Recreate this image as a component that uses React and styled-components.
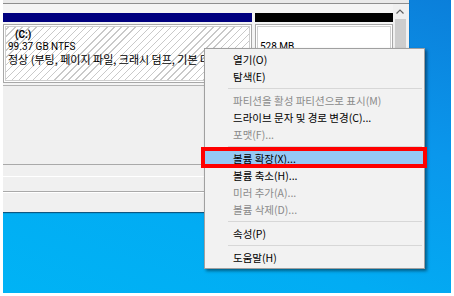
import React from "react";
import styled, { createGlobalStyle } from "styled-components";

const GlobalStyle = createGlobalStyle`
  html, body {
    margin: 0;
    padding: 0;
    background: #ffffff;
  }
  body {
    font-family: "Noto Sans CJK KR", "Noto Sans", sans-serif;
  }
`;

const Screen = styled.div`
  width: 454px;
  height: 296px;
  background: #ffffff;
  padding: 0 3px 3px 3px;
  box-sizing: border-box;
`;

const Desktop = styled.div`
  position: relative;
  width: 448px;
  height: 293px;
  background: linear-gradient(200deg, #0b7fda 0%, #0a97ec 35%, #02acf3 70%, #00b3f5 100%);
  overflow: hidden;
`;

const Window = styled.div`
  width: 406px;
  height: 212px;
  display: flex;
  flex-direction: column;
  background: #f0f0f0;
  box-shadow: 0 1px 1px rgba(20, 50, 80, 0.7);
`;

const TopRule = styled.div`
  height: 3px;
  background: #e9e9e9;
  border-bottom: 1px solid #8e8e8e;
`;

const DiskArea = styled.div`
  display: flex;
  height: 81px;
  border-bottom: 1px solid #b4b4b4;
`;

const DiskPane = styled.div`
  flex: 1;
  display: flex;
  gap: 3px;
  padding-top: 9px;
  background: #f4f4f4;
`;

const Partition = styled.div`
  width: ${({ $w }) => $w}px;
  display: flex;
  flex-direction: column;
  gap: 2px;
`;

const PartitionBar = styled.div`
  height: 9px;
  background: ${({ $color }) => $color};
`;

const PartitionBox = styled.div`
  height: 59px;
  box-sizing: border-box;
  border: 1px solid #a8a8a8;
  box-shadow: inset 0 0 0 1px #ffffff, inset 0 0 0 2px #cfcfcf;
  padding: 4px 4px 0 4px;
  background: ${({ $hatched }) =>
    $hatched
      ? "repeating-linear-gradient(135deg, #ffffff 0 4px, #c9c9c9 4px 5px)"
      : "#ffffff"};
  overflow: hidden;
  white-space: nowrap;
  line-height: 12px;
  color: #000;
`;

const BoxLine = styled.div`
  height: 12px;
  padding-left: ${({ $indent }) => $indent || 0}px;
  font-weight: ${({ $bold }) => ($bold ? 700 : 400)};
  font-family: ${({ $latin }) =>
    $latin ? '"Roboto", "Noto Sans CJK KR", sans-serif' : '"Noto Sans CJK KR", sans-serif'};
  font-size: ${({ $latin }) => ($latin ? "10px" : "11px")};
`;

const Scrollbar = styled.div`
  width: 16px;
  display: flex;
  flex-direction: column;
  align-items: center;
  background: #f0f0f0;
  padding-right: 2px;
  box-sizing: border-box;
`;

const ScrollArrow = styled.div`
  height: 15px;
  display: flex;
  align-items: center;
  justify-content: center;
`;

const ScrollThumb = styled.div`
  width: 11px;
  flex: 1;
  background: #cdcdcd;
`;

const LowerPane = styled.div`
  flex: 1;
  display: flex;
  flex-direction: column;
`;

const Band = styled.div`
  height: ${({ $h }) => $h}px;
  background: #f0f0f0;
  border-bottom: 1px solid ${({ $line }) => $line || "transparent"};
`;

const Menu = styled.div`
  position: absolute;
  left: 201px;
  top: 48px;
  width: 221px;
  box-sizing: border-box;
  padding: 2px 0;
  background: #f2f2f2;
  border: 1px solid #a0a0a0;
  box-shadow: 2px 2px 3px rgba(0, 0, 0, 0.45);
  font-size: 10.5px;
`;

const MenuItem = styled.div`
  position: relative;
  height: 17px;
  display: flex;
  align-items: center;
  padding-left: 28px;
  color: ${({ $disabled }) => ($disabled ? "#8a8a8a" : "#000000")};
  background: ${({ $active }) => ($active ? "#95c8f5" : "transparent")};
  white-space: nowrap;
`;

const Separator = styled.div`
  height: 1px;
  margin: 3px 2px 3px 23px;
  background: #d7d7d7;
`;

const Callout = styled.div`
  position: absolute;
  left: -4px;
  right: -3px;
  top: -3px;
  bottom: -1px;
  border: 4px solid #ff0000;
  pointer-events: none;
`;

const menuItems = [
  { label: "열기(O)" },
  { label: "탐색(E)" },
  { sep: true },
  { label: "파티션을 활성 파티션으로 표시(M)", disabled: true },
  { label: "드라이브 문자 및 경로 변경(C)..." },
  { label: "포맷(F)...", disabled: true },
  { sep: true },
  { label: "볼륨 확장(X)...", active: true },
  { label: "볼륨 축소(H)..." },
  { label: "미러 추가(A)...", disabled: true },
  { label: "볼륨 삭제(D)...", disabled: true },
  { sep: true },
  { label: "속성(P)" },
  { sep: true },
  { label: "도움말(H)" },
];

const UpArrow = () => (
  <svg width="8" height="5" viewBox="0 0 8 5">
    <path d="M0.5 4.5 L4 1 L7.5 4.5" fill="none" stroke="#606060" strokeWidth="1.2" />
  </svg>
);

export default function App() {
  return (
    <Screen>
      <GlobalStyle />
      <Desktop>
        <Window>
          <TopRule />
          <DiskArea>
            <DiskPane>
              <Partition $w={249}>
                <PartitionBar $color="#00007f" />
                <PartitionBox $hatched>
                  <BoxLine $indent={7} $bold $latin>(C:)</BoxLine>
                  <BoxLine $latin>99.37 GB NTFS</BoxLine>
                  <BoxLine>정상 (부팅, 페이지 파일, 크래시 덤프, 기본 데이터 파티션)</BoxLine>
                </PartitionBox>
              </Partition>
              <Partition $w={138}>
                <PartitionBar $color="#000000" />
                <PartitionBox>
                  <BoxLine>&nbsp;</BoxLine>
                  <BoxLine $latin>528 MB</BoxLine>
                  <BoxLine>정상 (복구 파티션)</BoxLine>
                </PartitionBox>
              </Partition>
            </DiskPane>
            <Scrollbar>
              <ScrollArrow>
                <UpArrow />
              </ScrollArrow>
              <ScrollThumb />
            </Scrollbar>
          </DiskArea>
          <LowerPane>
            <Band $h={78} $line="#a9a9a9" />
            <Band $h={11} $line="#ffffff" />
            <Band $h={14} $line="#a9a9a9" />
            <Band $h={0} $line="#ffffff" />
            <Band $h={18} />
          </LowerPane>
        </Window>
        <Menu>
          {menuItems.map((item, i) =>
            item.sep ? (
              <Separator key={i} />
            ) : (
              <MenuItem key={i} $disabled={item.disabled} $active={item.active}>
                {item.label}
                {item.active && <Callout />}
              </MenuItem>
            )
          )}
        </Menu>
      </Desktop>
    </Screen>
  );
}
